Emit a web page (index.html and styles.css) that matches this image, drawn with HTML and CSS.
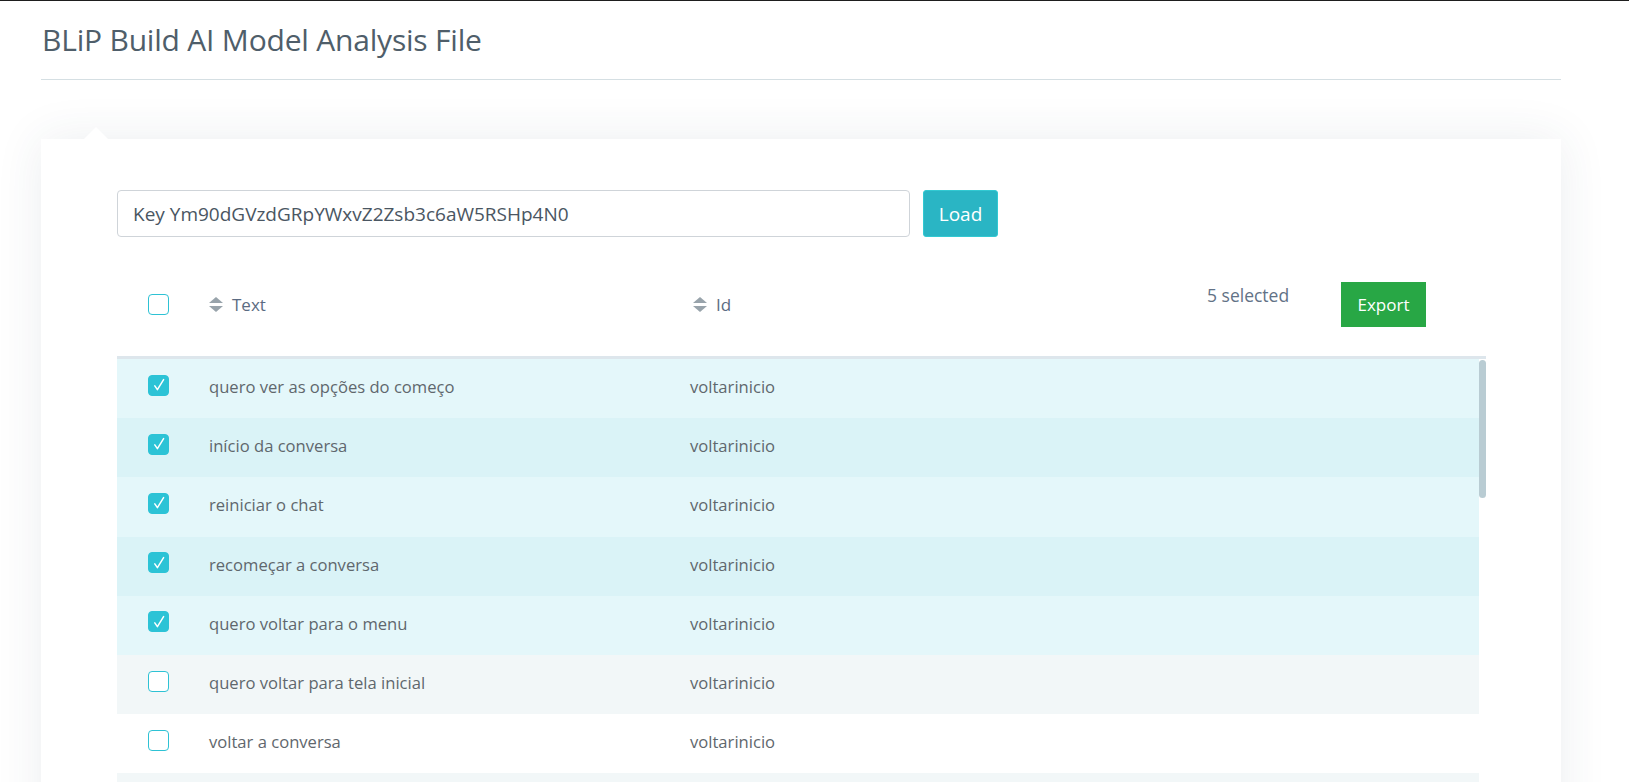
FILE: index.html
```html
<!DOCTYPE html>
<html lang="pt">
<head>
<meta charset="utf-8">
<title>BLiP Build AI Model Analysis File</title>
<link rel="stylesheet" href="styles.css">
</head>
<body>
<div class="page">
  <header class="page-header">
    <h1 class="title">BLiP Build AI Model Analysis File</h1>
  </header>
  <main class="card">
    <span class="caret"></span>
    <div class="key-form">
      <input class="key-input" type="text" value="Key Ym90dGVzdGRpYWxvZ2Zsb3c6aW5RSHp4N0">
      <button class="btn-load">Load</button>
    </div>
    <div class="table">
      <div class="thead">
        <div class="col-check"><span class="cb"></span></div>
        <div class="col-text th"><span class="sort"></span>Text</div>
        <div class="col-id th"><span class="sort"></span>Id</div>
        <div class="selected-count">5 selected</div>
        <button class="btn-export">Export</button>
      </div>
      <div class="tbody">
        <div class="rows">
          <div class="row sel"><div class="col-check"><span class="cb on"><svg viewBox="0 0 20 20"><path d="M5.8 10.8 L8.4 14.6 L14.6 4.6"/></svg></span></div><div class="col-text">quero ver as opções do começo</div><div class="col-id">voltarinicio</div></div>
          <div class="row sel"><div class="col-check"><span class="cb on"><svg viewBox="0 0 20 20"><path d="M5.8 10.8 L8.4 14.6 L14.6 4.6"/></svg></span></div><div class="col-text">início da conversa</div><div class="col-id">voltarinicio</div></div>
          <div class="row sel"><div class="col-check"><span class="cb on"><svg viewBox="0 0 20 20"><path d="M5.8 10.8 L8.4 14.6 L14.6 4.6"/></svg></span></div><div class="col-text">reiniciar o chat</div><div class="col-id">voltarinicio</div></div>
          <div class="row sel"><div class="col-check"><span class="cb on"><svg viewBox="0 0 20 20"><path d="M5.8 10.8 L8.4 14.6 L14.6 4.6"/></svg></span></div><div class="col-text">recomeçar a conversa</div><div class="col-id">voltarinicio</div></div>
          <div class="row sel"><div class="col-check"><span class="cb on"><svg viewBox="0 0 20 20"><path d="M5.8 10.8 L8.4 14.6 L14.6 4.6"/></svg></span></div><div class="col-text">quero voltar para o menu</div><div class="col-id">voltarinicio</div></div>
          <div class="row"><div class="col-check"><span class="cb"></span></div><div class="col-text">quero voltar para tela inicial</div><div class="col-id">voltarinicio</div></div>
          <div class="row"><div class="col-check"><span class="cb"></span></div><div class="col-text">voltar a conversa</div><div class="col-id">voltarinicio</div></div>
          <div class="row row-last"></div>
        </div>
        <div class="vscroll"><div class="vthumb"></div></div>
      </div>
    </div>
  </main>
</div>
</body>
</html>
```
FILE: styles.css
```css
* { box-sizing: border-box; }
html, body { margin: 0; padding: 0; background: #fff; }
body {
  border-top: 1px solid #1e1e1e;
  font-family: "Open Sans", "Liberation Sans", sans-serif;
  overflow: hidden;
  height: 782px;
}
.page {
  width: 1520px;
  margin-left: 41px;
}
.page-header {
  height: 79px;
  border-bottom: 1px solid #d5dfe3;
  display: flex;
  align-items: flex-start;
}
.title {
  margin: 21px 0 0 1px;
  font-size: 30px;
  font-weight: 400;
  color: #4f5e6a;
  line-height: 36px;
  letter-spacing: -0.2px;
}
.card {
  position: relative;
  margin-top: 59px;
  background: #fff;
  box-shadow: 0 0 45px rgba(40, 70, 90, 0.09);
  padding: 51px 75px 60px 76px;
  height: 900px;
}
.caret {
  position: absolute;
  left: 43px;
  top: -12px;
  width: 24px;
  height: 12px;
  background: #fff;
  clip-path: polygon(50% 0, 100% 100%, 0 100%);
}
.key-form {
  display: flex;
  gap: 13px;
}
.key-input {
  width: 793px;
  height: 47px;
  border: 1px solid #cfd4d9;
  border-radius: 4px;
  padding: 0 15px;
  font-family: inherit;
  font-size: 19px;
  color: #4a5662;
  outline: none;
}
.btn-load {
  width: 75px;
  height: 47px;
  background: #2ab5c4;
  border: 1px solid #32c9d2;
  border-radius: 3px;
  color: #fff;
  font-family: inherit;
  font-size: 19px;
  padding: 0;
}
.table {
  margin-top: 18px;
  width: 1369px;
}
.thead {
  display: flex;
  align-items: center;
  height: 104px;
  border-bottom: 3px solid #dde6ec;
  padding-bottom: 2px;
}
.col-check {
  width: 92px;
  padding-left: 31px;
  flex: none;
  display: flex;
}
.col-text {
  width: 481px;
  flex: none;
}
.col-id {
  width: 400px;
  flex: none;
}
.th {
  display: flex;
  align-items: center;
  color: #5b6b82;
  font-size: 17px;
}
.col-id.th { padding-left: 3px; }
.sort {
  width: 14px;
  height: 15px;
  margin-right: 9px;
  position: relative;
  display: inline-block;
}
.sort::before, .sort::after {
  content: "";
  position: absolute;
  left: 0;
  border-left: 7px solid transparent;
  border-right: 7px solid transparent;
}
.sort::before { top: 0; border-bottom: 6px solid #98a3ab; }
.sort::after { bottom: 0; border-top: 6px solid #98a3ab; }
.selected-count {
  width: 251px;
  padding-left: 117px;
  color: #627286;
  font-size: 17.5px;
  margin-top: -19px;
  flex: none;
}
.btn-export {
  flex: none;
  width: 85px;
  height: 45px;
  background: #28a745;
  border: none;
  border-radius: 0;
  color: #fff;
  font-family: inherit;
  font-size: 17px;
  padding: 0;
}
.cb {
  width: 21px;
  height: 21px;
  border: 1.5px solid #2ec2d4;
  border-radius: 4px;
  background: #fff;
  display: inline-flex;
  align-items: center;
  justify-content: center;
}
.cb.on {
  background: #2cc3d6;
  border-color: #2cc3d6;
}
.cb svg {
  width: 20px;
  height: 20px;
  flex: none;
  fill: none;
  stroke: #fff;
  stroke-width: 1.5;
  stroke-linecap: round;
  stroke-linejoin: round;
}
.tbody {
  display: flex;
  align-items: flex-start;
}
.rows {
  width: 1362px;
  flex: none;
}
.vscroll {
  width: 7px;
  flex: none;
  padding-top: 1px;
}
.vthumb {
  height: 138px;
  background: #b9ccd3;
  border-radius: 4px;
}
.row {
  display: flex;
  align-items: center;
  height: 59.2px;
  padding-bottom: 4px;
  color: #5f676d;
  font-size: 16.6px;
}
.row:nth-child(odd) { background: #fff; }
.row:nth-child(even) { background: #f2f7f8; }
.row.sel:nth-child(odd) { background: #e4f7fa; }
.row.sel:nth-child(even) { background: #daf3f7; }
.row .col-check { margin-top: -3px; }
```
